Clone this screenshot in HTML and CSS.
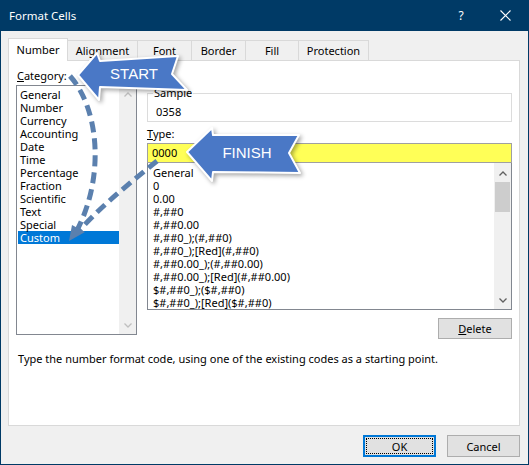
FILE: index.html
```html
<!DOCTYPE html>
<html lang="en">
<head>
    <meta charset="UTF-8">
    <title>Format Cells</title>
    <link rel="stylesheet" href="styles.css">
</head>
<body>
    <div class="window">
        <!-- TITLE BAR -->
        <div class="titlebar">
            <span class="title">Format Cells</span>
            <span class="help">?</span>
            <svg class="close" width="11" height="11" viewBox="0 0 11 11">
                <path d="M0.5,0.5 L10.5,10.5 M10.5,0.5 L0.5,10.5" />
            </svg>
        </div>

        <div class="dialog">
            <!-- TABS -->
            <div class="tabs">
                <div class="tab active tab-number">Number</div>
                <div class="tab tab-alignment">Alignment</div>
                <div class="tab tab-font">Font</div>
                <div class="tab tab-border">Border</div>
                <div class="tab tab-fill">Fill</div>
                <div class="tab tab-protection">Protection</div>
            </div>

            <!-- NUMBER PAGE -->
            <div class="panel">
                <div class="columns">
                    <div class="category">
                        <div class="label"><u>C</u>ategory:</div>
                        <div class="listbox cat-list">
                            <ul class="items">
                                <li>General</li>
                                <li>Number</li>
                                <li>Currency</li>
                                <li>Accounting</li>
                                <li>Date</li>
                                <li>Time</li>
                                <li>Percentage</li>
                                <li>Fraction</li>
                                <li>Scientific</li>
                                <li>Text</li>
                                <li>Special</li>
                                <li class="selected">Custom</li>
                            </ul>
                            <div class="scrollbar disabled">
                                <div class="arrow">
                                    <svg width="8" height="5" viewBox="0 0 8 5"><polyline points="0.5,4.5 4,1 7.5,4.5" /></svg>
                                </div>
                                <div class="arrow">
                                    <svg width="8" height="5" viewBox="0 0 8 5"><polyline points="0.5,0.5 4,4 7.5,0.5" /></svg>
                                </div>
                            </div>
                        </div>
                    </div>

                    <div class="details">
                        <fieldset class="sample">
                            <legend>Sample</legend>
                            <div class="sample-value">0358</div>
                        </fieldset>

                        <div class="label type-label"><u>T</u>ype:</div>
                        <div class="type-input">0000</div>
                        <div class="listbox type-list">
                            <ul class="items">
                                <li>General</li>
                                <li>0</li>
                                <li>0.00</li>
                                <li>#,##0</li>
                                <li>#,##0.00</li>
                                <li>#,##0_);(#,##0)</li>
                                <li>#,##0_);[Red](#,##0)</li>
                                <li>#,##0.00_);(#,##0.00)</li>
                                <li>#,##0.00_);[Red](#,##0.00)</li>
                                <li>$#,##0_);($#,##0)</li>
                                <li>$#,##0_);[Red]($#,##0)</li>
                            </ul>
                            <div class="scrollbar">
                                <div class="arrow arrow-up">
                                    <svg width="8" height="5" viewBox="0 0 8 5"><polyline points="0.5,4.5 4,1 7.5,4.5" /></svg>
                                </div>
                                <div class="thumb"></div>
                                <div class="track"></div>
                                <div class="arrow arrow-down">
                                    <svg width="8" height="5" viewBox="0 0 8 5"><polyline points="0.5,0.5 4,4 7.5,0.5" /></svg>
                                </div>
                            </div>
                        </div>

                        <div class="actions">
                            <button class="btn btn-delete"><u>D</u>elete</button>
                        </div>
                    </div>
                </div>

                <p class="hint">Type the number format code, using one of the existing codes as a starting point.</p>
            </div>

            <!-- FOOTER -->
            <div class="footer">
                <button class="btn btn-default">OK</button>
                <button class="btn">Cancel</button>
            </div>
        </div>

        <!-- CALLOUTS DRAWN OVER THE DIALOG -->
        <svg class="annotations" width="529" height="465" viewBox="0 0 529 465">
            <path class="dash" d="M70,76 C100,110 105,180 75,234" />
            <path class="dash" d="M157,161 C130,183 102,205 78,232" />
            <polygon class="dash-head" points="69,241 72,225 85,232" />
            <g class="callout">
                <polygon points="78,75 97,53 100,61 178,56 172,74 187,90 100,87 99,100" />
                <text x="134" y="79">START</text>
            </g>
            <g class="callout">
                <polygon points="187,152 212,128 213,135 299,135 289,153 300,173 213,172 212,181" />
                <text x="247" y="158">FINISH</text>
            </g>
        </svg>
    </div>
</body>
</html>
```

FILE: styles.css
```css
:root {
    --title-color: #003a66;
    --tab-border: #d9d9d9;
    --list-border: #828790;
    --select-color: #0078d7;
    --button-bg: #e1e1e1;
    --button-border: #adadad;
    --callout-color: #4a78c6;
    --dash-color: #5b80ae;
}

body {
    margin: 0;
    font-family: 'Noto Sans', 'Open Sans', sans-serif;
    font-size: 11px;
    color: #000;
}

/* WINDOW */
.window {
    position: relative;
    width: 529px;
    height: 465px;
    box-sizing: border-box;
    border: 1px solid var(--title-color);
    border-top: none;
    background: #f0f0f0;
    display: flex;
    flex-direction: column;
    overflow: hidden;
}

.titlebar {
    height: 31px;
    flex-shrink: 0;
    background: var(--title-color);
    color: white;
    display: flex;
    align-items: center;
    padding: 0 17px 0 8px;
    font-size: 11.5px;
}

.title {
    flex: 1;
}

.help {
    width: 12px;
    text-align: center;
    font-size: 12px;
    margin-right: 33px;
}

.close path {
    stroke: white;
    stroke-width: 1.1;
    fill: none;
}

.dialog {
    flex: 1;
    padding: 7px 8px 0 7px;
}

/* TABS */
.tabs {
    display: flex;
    align-items: flex-end;
    height: 22px;
}

.tab {
    height: 20px;
    box-sizing: border-box;
    border: 1px solid var(--tab-border);
    border-bottom: none;
    margin-left: -1px;
    padding-top: 1px;
    line-height: 18px;
    text-align: center;
    background: #f0f0f0;
}

.tab.active {
    height: 23px;
    margin-left: 0;
    margin-bottom: -1px;
    padding-top: 1px;
    line-height: 20px;
    background: white;
    position: relative;
    z-index: 1;
}

.tab-number { width: 60px; }
.tab-alignment { width: 71px; }
.tab-font { width: 55px; }
.tab-border { width: 55px; }
.tab-fill { width: 54px; }
.tab-protection { width: 71px; }

/* PANEL */
.panel {
    height: 366px;
    box-sizing: border-box;
    background: white;
    border: 1px solid var(--tab-border);
    padding: 0 6px 0 7px;
}

.columns {
    display: flex;
    gap: 10px;
}

.label {
    line-height: 16px;
}

.category {
    width: 121px;
}

.category .label {
    margin-top: 7px;
    padding-left: 1px;
}

.listbox {
    box-sizing: border-box;
    border: 1px solid var(--list-border);
    display: flex;
}

.items {
    flex: 1;
    list-style: none;
    margin: 0;
    padding: 2px 0 0 1px;
}

.items li {
    line-height: 13px;
    padding-left: 2px;
    white-space: nowrap;
}

.items li.selected {
    background: var(--select-color);
    color: white;
}

.cat-list {
    height: 250px;
    margin-top: 1px;
}

/* SCROLLBARS */
.scrollbar {
    width: 17px;
    background: #f0f0f0;
    display: flex;
    flex-direction: column;
    justify-content: space-between;
}

.arrow {
    height: 17px;
    display: flex;
    align-items: center;
    justify-content: center;
}

.arrow polyline {
    fill: none;
    stroke: #606060;
    stroke-width: 1.3;
}

.scrollbar.disabled .arrow polyline {
    stroke: #bfbfbf;
}

.thumb {
    height: 30px;
    margin: 0 1px;
    background: #cdcdcd;
}

.track {
    flex: 1;
}

/* RIGHT SIDE */
.details {
    width: 365px;
}

.sample {
    margin: 24px 0 0;
    padding: 0 0 1px 5px;
    border: 1px solid #dcdcdc;
}

.sample legend {
    padding: 0 1px;
    line-height: 16px;
}

.sample-value {
    margin-top: 3px;
    padding-left: 3px;
    line-height: 16px;
}

.type-label {
    margin-top: 4px;
}

.type-input {
    margin-top: 1px;
    height: 20px;
    box-sizing: border-box;
    border: 1px solid #a0a0a0;
    background: #ffff57;
    padding-left: 4px;
    line-height: 18px;
}

.type-list {
    height: 147px;
    border-top: none;
}

.type-list .items {
    padding: 3px 0 0 3px;
}

.type-list .arrow-up {
    height: 19px;
    padding-top: 2px;
    box-sizing: border-box;
}

.actions {
    display: flex;
    justify-content: flex-end;
    margin-top: 8px;
}

/* BUTTONS */
.btn {
    font-family: inherit;
    font-size: 11px;
    color: #000;
    background: var(--button-bg);
    border: 1px solid var(--button-border);
    padding: 0;
    width: 73px;
    height: 22px;
}

.btn-delete {
    width: 74px;
    height: 21px;
}

.btn-default {
    border-color: var(--select-color);
    box-shadow: inset 0 0 0 1px var(--select-color);
    outline: 1px dotted #000;
    outline-offset: -4px;
}

.hint {
    margin: 12px 0 0;
    padding-left: 2px;
    line-height: 16px;
}

.footer {
    display: flex;
    justify-content: flex-end;
    gap: 11px;
    margin-top: 9px;
}

/* CALLOUTS */
.annotations {
    position: absolute;
    top: 0;
    left: -1px;
    pointer-events: none;
}

.dash {
    fill: none;
    stroke: var(--dash-color);
    stroke-width: 5;
    stroke-dasharray: 11 6;
}

.dash-head {
    fill: var(--dash-color);
}

.callout polygon {
    fill: var(--callout-color);
    stroke: white;
    stroke-width: 2;
    stroke-linejoin: round;
    filter: drop-shadow(2px 2px 2px rgba(0, 0, 0, 0.35));
}

.callout text {
    font-family: 'Liberation Sans', Arial, sans-serif;
    font-size: 15px;
    fill: white;
    text-anchor: middle;
}
```
